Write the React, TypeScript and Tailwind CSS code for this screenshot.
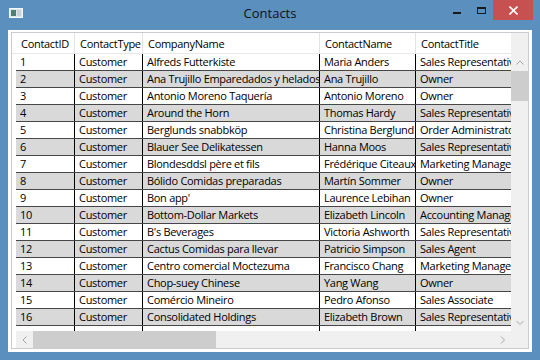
import React from "react";

type Row = [string, string, string, string, string];

const rows: Row[] = [
  ["1", "Customer", "Alfreds Futterkiste", "Maria Anders", "Sales Representative"],
  ["2", "Customer", "Ana Trujillo Emparedados y helados", "Ana Trujillo", "Owner"],
  ["3", "Customer", "Antonio Moreno Taquería", "Antonio Moreno", "Owner"],
  ["4", "Customer", "Around the Horn", "Thomas Hardy", "Sales Representative"],
  ["5", "Customer", "Berglunds snabbköp", "Christina Berglund", "Order Administrator"],
  ["6", "Customer", "Blauer See Delikatessen", "Hanna Moos", "Sales Representative"],
  ["7", "Customer", "Blondesddsl père et fils", "Frédérique Citeaux", "Marketing Manager"],
  ["8", "Customer", "Bólido Comidas preparadas", "Martín Sommer", "Owner"],
  ["9", "Customer", "Bon app'", "Laurence Lebihan", "Owner"],
  ["10", "Customer", "Bottom-Dollar Markets", "Elizabeth Lincoln", "Accounting Manager"],
  ["11", "Customer", "B's Beverages", "Victoria Ashworth", "Sales Representative"],
  ["12", "Customer", "Cactus Comidas para llevar", "Patricio Simpson", "Sales Agent"],
  ["13", "Customer", "Centro comercial Moctezuma", "Francisco Chang", "Marketing Manager"],
  ["14", "Customer", "Chop-suey Chinese", "Yang Wang", "Owner"],
  ["15", "Customer", "Comércio Mineiro", "Pedro Afonso", "Sales Associate"],
  ["16", "Customer", "Consolidated Holdings", "Elizabeth Brown", "Sales Representative"],
  ["", "", "", "", ""],
];

const headers = ["ContactID", "ContactType", "CompanyName", "ContactName", "ContactTitle"];
const widths = ["w-[59px]", "w-[68px]", "w-[177px]", "w-[96px]", "w-[150px]"];

function Chevron({ dir }: { dir: "up" | "down" | "left" | "right" }) {
  const pts =
    dir === "up"
      ? "0.5,4.5 4,1 7.5,4.5"
      : dir === "down"
      ? "0.5,1 4,4.5 7.5,1"
      : dir === "left"
      ? "4.5,0.5 1,4 4.5,7.5"
      : "1,0.5 4.5,4 1,7.5";
  const vertical = dir === "up" || dir === "down";
  return (
    <svg width={vertical ? 8 : 6} height={vertical ? 6 : 8} viewBox={vertical ? "0 0 8 6" : "0 0 6 8"}>
      <polyline points={pts} fill="none" stroke="#a3a3a3" strokeWidth="1" />
    </svg>
  );
}

export default function App() {
  return (
    <div className="w-[540px] h-[360px] bg-[#5b8fbe] flex flex-col overflow-hidden font-['Open_Sans',sans-serif] text-black">
      {/* Title bar */}
      <div className="h-[30px] shrink-0 grid grid-cols-[1fr_auto_1fr] items-start">
        <div className="pl-[9px] pt-[8px]">
          <svg width="14" height="10" viewBox="0 0 14 10">
            <rect x="0.5" y="0.5" width="13" height="9" fill="#dfe7ee" stroke="#f4f7fa" />
            <rect x="2" y="2" width="5" height="6" fill="#4f7f70" />
            <rect x="8" y="2" width="4" height="6" fill="#c9d3dc" />
          </svg>
        </div>
        <div className="pt-[4px] text-[13px] leading-[18px] text-[#111]">Contacts</div>
        <div className="flex justify-self-end mr-[7px]">
          <div className="w-[24px] h-[20px] flex justify-center pt-[12px]">
            <div className="w-[8px] h-[2px] bg-[#1a1a1a]" />
          </div>
          <div className="w-[24px] h-[20px] flex justify-center pt-[7px]">
            <div className="w-[9px] h-[7px] border border-t-2 border-[#1a1a1a]" />
          </div>
          <div className="w-[40px] h-[20px] bg-[#c75050] flex items-center justify-center">
            <svg width="9" height="9" viewBox="0 0 9 9">
              <line x1="0.5" y1="0.5" x2="8.5" y2="8.5" stroke="#fff" strokeWidth="1.6" />
              <line x1="8.5" y1="0.5" x2="0.5" y2="8.5" stroke="#fff" strokeWidth="1.6" />
            </svg>
          </div>
        </div>
      </div>

      {/* Client area */}
      <div className="flex-1 mx-[8px] mb-[8px] bg-white pt-[2px] pl-[3px] pr-[3px] pb-[3px] flex flex-col min-h-0">
        <div className="flex-1 border border-[#c8ccd1] flex flex-col min-h-0">
          <div className="flex-1 flex min-h-0">
            {/* Rows area */}
            <div className="flex-1 min-w-0 overflow-hidden flex flex-col">
              <div className="h-[21px] shrink-0 flex bg-white border-b border-[#e8e8e8]">
                <div className="w-[4px] shrink-0" />
                {headers.map((h, i) => (
                  <div
                    key={h}
                    className={`${widths[i]} shrink-0 border-r border-[#e3e3e3] pl-[5px] pt-[2px] text-[11px] tracking-[-0.3px] leading-[18px] whitespace-nowrap overflow-hidden`}
                  >
                    {h}
                  </div>
                ))}
              </div>
              <div className="flex-1 overflow-hidden">
                {rows.map((r, ri) => (
                  <div key={ri} className="h-[17px] flex">
                    <div className="w-[4px] shrink-0 bg-white" />
                    <div className={`flex border-b border-[#474747] ${ri % 2 === 1 ? "bg-[#d9d9d9]" : "bg-white"}`}>
                      {r.map((c, ci) => (
                        <div
                          key={ci}
                          className={`${widths[ci]} shrink-0 border-r border-black pl-[4px] text-[11px] tracking-[-0.3px] leading-[16px] whitespace-nowrap overflow-hidden`}
                        >
                          {c}
                        </div>
                      ))}
                    </div>
                  </div>
                ))}
              </div>
            </div>
            {/* Vertical scrollbar */}
            <div className="w-[17px] shrink-0 bg-[#f0f0f0] flex flex-col">
              <div className="h-[21px] shrink-0" />
              <div className="h-[17px] shrink-0 flex items-center justify-center">
                <Chevron dir="up" />
              </div>
              <div className="h-[30px] shrink-0 bg-[#cdcdcd]" />
              <div className="flex-1" />
              <div className="h-[17px] shrink-0 flex items-center justify-center">
                <Chevron dir="down" />
              </div>
            </div>
          </div>
          {/* Horizontal scrollbar */}
          <div className="h-[17px] shrink-0 flex">
            <div className="w-[4px] shrink-0 bg-white" />
            <div className="flex-1 bg-[#f0f0f0] flex">
              <div className="w-[17px] shrink-0 flex items-center justify-center">
                <Chevron dir="left" />
              </div>
              <div className="w-[183px] shrink-0 bg-[#cdcdcd]" />
              <div className="flex-1" />
              <div className="w-[17px] shrink-0 flex items-center justify-center">
                <Chevron dir="right" />
              </div>
            </div>
            <div className="w-[17px] shrink-0 bg-[#f0f0f0]" />
          </div>
        </div>
      </div>
    </div>
  );
}
